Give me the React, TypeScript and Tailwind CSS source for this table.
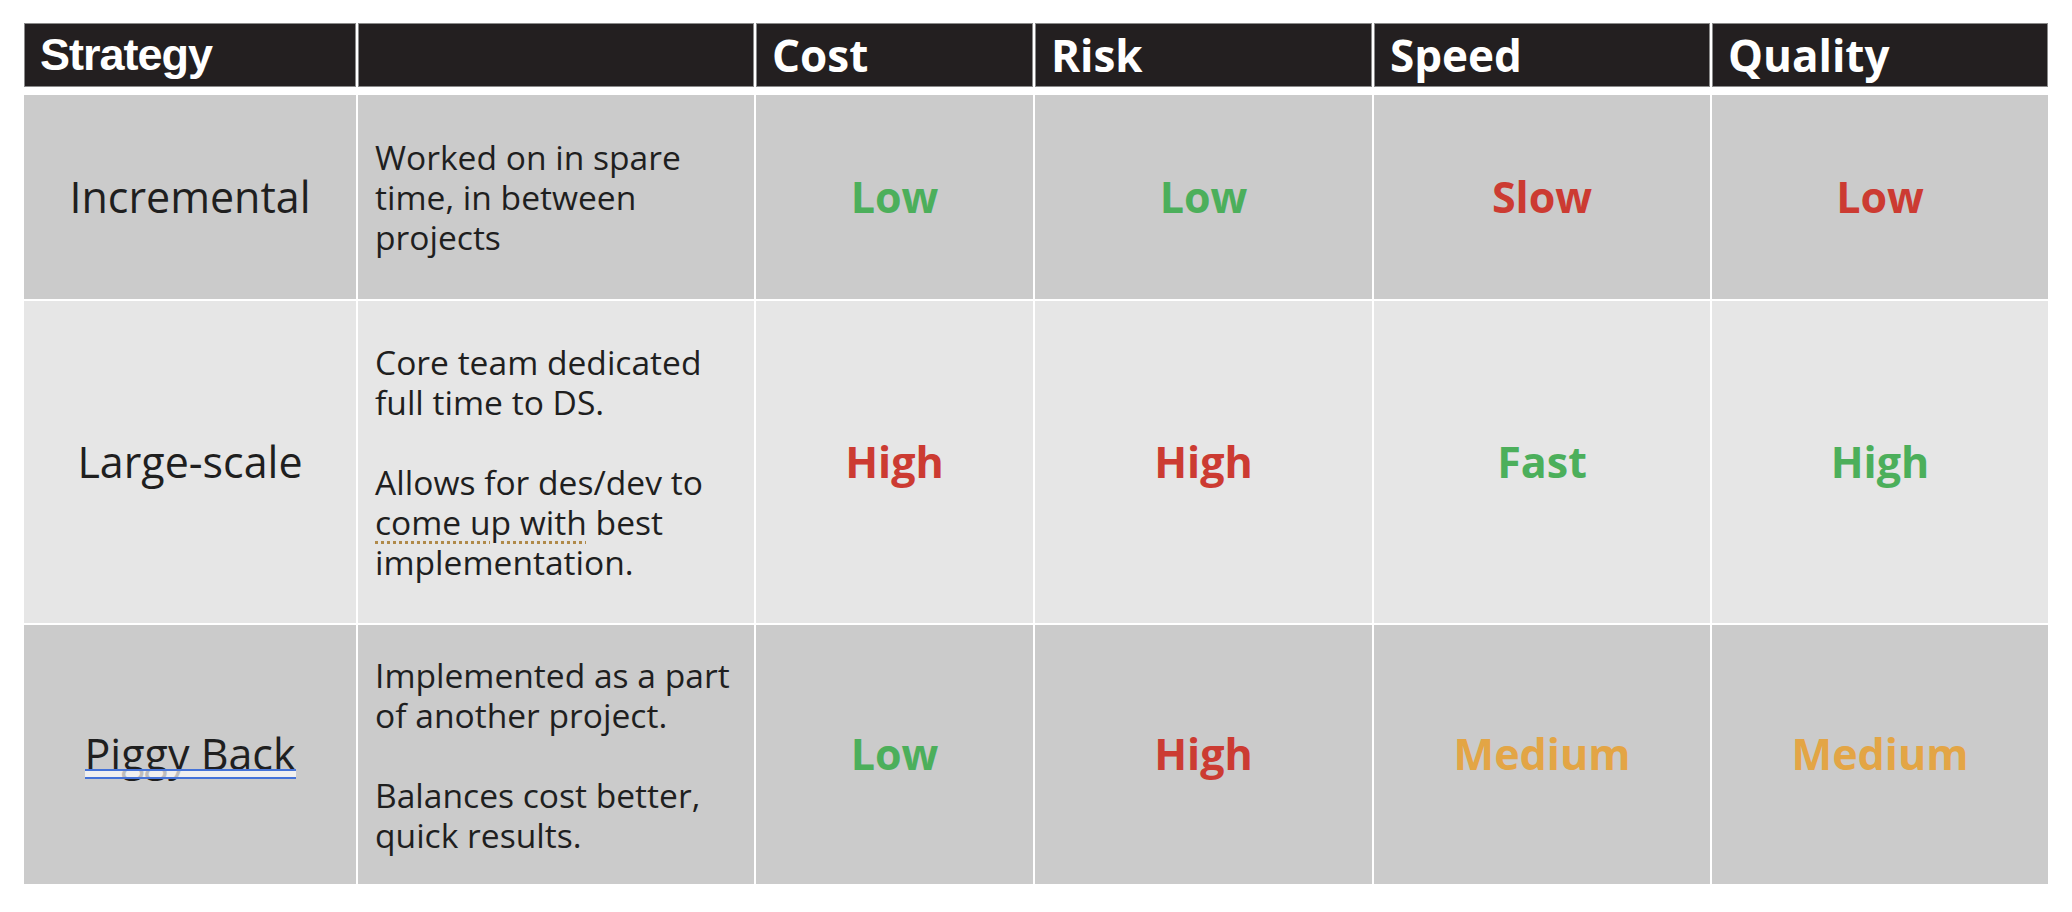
import React from "react";

type Level = { label: string; tone: "good" | "bad" | "mid" };

const toneClass: Record<Level["tone"], string> = {
  good: "text-[#4caf5b]",
  bad: "text-[#cc3b32]",
  mid: "text-[#e3a545]",
};

const rows: {
  name: React.ReactNode;
  desc: React.ReactNode;
  values: Level[];
  height: string;
  bg: string;
}[] = [
  {
    name: "Incremental",
    desc: (
      <>
        Worked on in spare
        <br />
        time, in between
        <br />
        projects
      </>
    ),
    values: [
      { label: "Low", tone: "good" },
      { label: "Low", tone: "good" },
      { label: "Slow", tone: "bad" },
      { label: "Low", tone: "bad" },
    ],
    height: "h-[204px]",
    bg: "bg-[#cbcbcb]",
  },
  {
    name: "Large-scale",
    desc: (
      <>
        Core team dedicated
        <br />
        full time to DS.
        <br />
        <br />
        Allows for des/dev to
        <br />
        <span className="underline decoration-dotted decoration-[#b08a4a] decoration-[3px] underline-offset-[6px]">
          come up with
        </span>{" "}
        best
        <br />
        implementation.
      </>
    ),
    values: [
      { label: "High", tone: "bad" },
      { label: "High", tone: "bad" },
      { label: "Fast", tone: "good" },
      { label: "High", tone: "good" },
    ],
    height: "h-[322px]",
    bg: "bg-[#e6e6e6]",
  },
  {
    name: (
      <span className="relative inline-block">
        Piggy Back
        <span className="absolute left-0 right-0 top-[47px] h-[10px] border-y-2 border-[#4573d8] bg-white/70" />
      </span>
    ),
    desc: (
      <>
        Implemented as a part
        <br />
        of another project.
        <br />
        <br />
        Balances cost better,
        <br />
        quick results.
      </>
    ),
    values: [
      { label: "Low", tone: "good" },
      { label: "High", tone: "bad" },
      { label: "Medium", tone: "mid" },
      { label: "Medium", tone: "mid" },
    ],
    height: "h-[259px]",
    bg: "bg-[#cbcbcb]",
  },
];

const cols = "grid grid-cols-[332px_396px_277px_337px_336px_336px] gap-x-[2px]";
const sans = "font-['Open_Sans',sans-serif]";

export default function App() {
  return (
    <div className="w-[2072px] h-[912px] bg-white pt-[23px] pl-[24px]">
      <div className={cols}>
        <div className="h-[64px] bg-[#231f20] border border-[#8a8a8a] flex items-center pl-[15px] text-white text-[45px] font-bold tracking-[-1px] font-['Liberation_Sans',Arial,sans-serif]">
          Strategy
        </div>
        <div className="h-[64px] bg-[#231f20] border border-[#8a8a8a]" />
        {["Cost", "Risk", "Speed", "Quality"].map((h) => (
          <div
            key={h}
            className={`h-[64px] bg-[#231f20] border border-[#8a8a8a] flex items-center pl-[15px] text-white text-[44px] font-bold ${sans}`}
          >
            {h}
          </div>
        ))}
      </div>

      <div className={`${cols} gap-y-[2px] mt-[8px]`}>
        {rows.map((row, i) => (
          <React.Fragment key={i}>
            <div
              className={`${row.height} ${row.bg} flex items-center justify-center text-[43px] text-[#1f1f1f] ${sans}`}
            >
              {row.name}
            </div>
            <div
              className={`${row.height} ${row.bg} flex items-center pl-[17px] text-[33.6px] leading-[40px] text-[#1f1f1f] whitespace-nowrap ${sans}`}
            >
              <div>{row.desc}</div>
            </div>
            {row.values.map((v, j) => (
              <div
                key={j}
                className={`${row.height} ${row.bg} flex items-center justify-center text-[43px] font-bold ${toneClass[v.tone]} ${sans}`}
              >
                {v.label}
              </div>
            ))}
          </React.Fragment>
        ))}
      </div>
    </div>
  );
}
